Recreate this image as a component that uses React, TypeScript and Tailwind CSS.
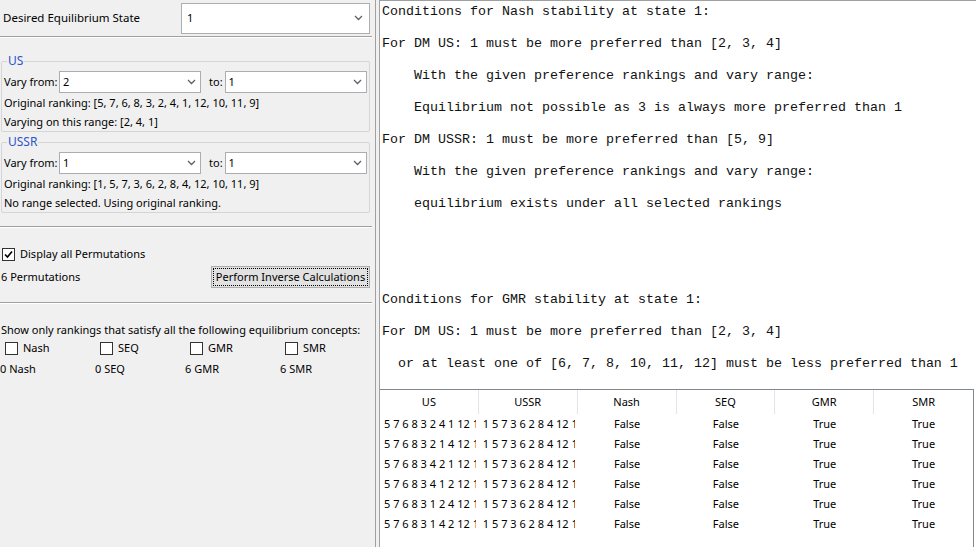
import React from "react";

const ui = { fontFamily: '"Noto Sans", "Open Sans", sans-serif' };
const mono = { fontFamily: '"Liberation Mono", "Courier New", monospace' };

function Chevron() {
  return (
    <svg width="9" height="6" viewBox="0 0 9 6" className="shrink-0">
      <polyline points="1,1 4.5,4.5 8,1" fill="none" stroke="#606060" strokeWidth="1.3" />
    </svg>
  );
}

function Combo({ value, className }: { value: string; className: string }) {
  return (
    <div className={`flex shrink-0 items-center justify-between bg-white border border-[#abadb3] pl-[3px] pr-[4px] ${className}`}>
      <span>{value}</span>
      <Chevron />
    </div>
  );
}

function Box({ checked }: { checked?: boolean }) {
  return (
    <div className="w-[13px] h-[13px] border border-[#333333] bg-white flex items-center justify-center shrink-0">
      {checked && (
        <svg width="9" height="9" viewBox="0 0 9 9">
          <polyline points="1,4.5 3.5,7 8,1.5" fill="none" stroke="#000" strokeWidth="1.6" />
        </svg>
      )}
    </div>
  );
}

function Separator() {
  return <div className="w-[372px] border-t border-[#a0a0a0] border-b border-b-white" />;
}

function Group({
  title,
  from,
  to,
  ranking,
  note,
}: {
  title: string;
  from: string;
  to: string;
  ranking: string;
  note: string;
}) {
  return (
    <fieldset className="ml-px w-[369px] border border-[#d5d5d5] rounded-[2px] px-[1px] pb-0">
      <legend className="ml-[4px] px-[1px] text-[#2b55c8] leading-[14px] text-[12px]">{title}</legend>
      <div className="flex items-center h-[22px] mt-[3px] whitespace-nowrap">
        <span className="ml-[1px] mr-[2px] w-[53px] shrink-0">Vary from:</span>
        <Combo value={from} className="w-[142px] h-[22px]" />
        <span className="ml-[8px] mr-[2px] shrink-0">to:</span>
        <Combo value={to} className="w-[142px] h-[22px]" />
      </div>
      <div className="h-[19px] leading-[19px] ml-[1px] whitespace-nowrap">{ranking}</div>
      <div className="h-[19px] leading-[19px] ml-[1px] whitespace-nowrap">{note}</div>
    </fieldset>
  );
}

const textLines = [
  "Conditions for Nash stability at state 1:",
  "",
  "For DM US: 1 must be more preferred than [2, 3, 4]",
  "",
  "    With the given preference rankings and vary range:",
  "",
  "    Equilibrium not possible as 3 is always more preferred than 1",
  "",
  "For DM USSR: 1 must be more preferred than [5, 9]",
  "",
  "    With the given preference rankings and vary range:",
  "",
  "    equilibrium exists under all selected rankings",
  "",
  "",
  "",
  "",
  "",
  "Conditions for GMR stability at state 1:",
  "",
  "For DM US: 1 must be more preferred than [2, 3, 4]",
  "",
  "  or at least one of [6, 7, 8, 10, 11, 12] must be less preferred than 1",
];

const usRows = [
  "5 7 6 8 3 2 4 1 12 10 11 9",
  "5 7 6 8 3 2 1 4 12 10 11 9",
  "5 7 6 8 3 4 2 1 12 10 11 9",
  "5 7 6 8 3 4 1 2 12 10 11 9",
  "5 7 6 8 3 1 2 4 12 10 11 9",
  "5 7 6 8 3 1 4 2 12 10 11 9",
];
const ussr = "1 5 7 3 6 2 8 4 12 10 11 9";
const heads = ["US", "USSR", "Nash", "SEQ", "GMR", "SMR"];

export default function App() {
  return (
    <div className="flex w-[976px] h-[547px] overflow-hidden bg-white text-[11px] text-black" style={ui}>
      {/* left pane */}
      <div className="w-[376px] shrink-0 h-full bg-[#f0f0f0] border-r border-[#a0a0a0] flex flex-col whitespace-nowrap">
        <div className="flex items-center h-[36px]">
          <span className="ml-[3px] w-[178px] text-[11.5px]">Desired Equilibrium State</span>
          <Combo value="1" className="w-[189px] h-[31px] pl-[5px] pr-[6px]" />
        </div>
        <Separator />
        <div className="mt-[16px]">
          <Group
            title="US"
            from="2"
            to="1"
            ranking="Original ranking: [5, 7, 6, 8, 3, 2, 4, 1, 12, 10, 11, 9]"
            note="Varying on this range: [2, 4, 1]"
          />
        </div>
        <div className="mt-[3px]">
          <Group
            title="USSR"
            from="1"
            to="1"
            ranking="Original ranking: [1, 5, 7, 3, 6, 2, 8, 4, 12, 10, 11, 9]"
            note="No range selected. Using original ranking."
          />
        </div>
        <div className="mt-[13px]">
          <Separator />
        </div>
        <div className="flex items-center gap-[5px] ml-[2px] mt-[18px] h-[16px]">
          <Box checked />
          <span>Display all Permutations</span>
        </div>
        <div className="flex items-center justify-between mt-[4px] h-[22px] w-[370px]">
          <span className="ml-px">6 Permutations</span>
          <div className="h-[22px] w-[159px] bg-[#e1e1e1] border border-[#adadad] p-[1px]">
            <div className="h-full w-full border border-dotted border-black flex items-center justify-center">
              Perform Inverse Calculations
            </div>
          </div>
        </div>
        <div className="mt-[14px]">
          <Separator />
        </div>
        <div className="mt-[18px] ml-px h-[16px] leading-[16px]">
          Show only rankings that satisfy all the following equilibrium concepts:
        </div>
        <div className="grid grid-cols-[95px_90px_95px_1fr] mt-[2px] h-[16px]">
          {["Nash", "SEQ", "GMR", "SMR"].map((n) => (
            <div key={n} className="flex items-center gap-[5px] pl-[5px]">
              <Box />
              <span>{n}</span>
            </div>
          ))}
        </div>
        <div className="grid grid-cols-[95px_90px_95px_1fr] mt-[5px] h-[16px] leading-[16px]">
          <span>0 Nash</span>
          <span>0 SEQ</span>
          <span>6 GMR</span>
          <span>6 SMR</span>
        </div>
      </div>
      <div className="w-[3px] shrink-0 bg-[#f0f0f0]" />
      {/* right pane */}
      <div className="flex-1 h-full border-l border-[#a0a0a0] flex flex-col">
        <div className="h-[387px] border-t border-[#a0a0a0] pt-[3px] pl-[2px] text-[13.33px] leading-[16px] text-[#111]" style={mono}>
          {textLines.map((l, i) => (
            <div key={i} className="h-[16px] whitespace-pre">
              {l}
            </div>
          ))}
        </div>
        <div className="mt-[2px] mr-[2px] flex-1 border-t border-r border-[#828790]">
          <div className="grid grid-cols-6 h-[24px] bg-white">
            {heads.map((h, i) => (
              <div
                key={h}
                className={`flex items-center justify-center ${i < 5 ? "border-r border-[#e5e5e5]" : ""}`}
              >
                {h}
              </div>
            ))}
          </div>
          {usRows.map((r, i) => (
            <div key={i} className="grid grid-cols-6 h-[20px] leading-[20px]">
              <div className="min-w-0">
                <div className="ml-[4px] mr-[3px] overflow-hidden whitespace-nowrap">{r}</div>
              </div>
              <div className="min-w-0">
                <div className="ml-[4px] mr-[3px] overflow-hidden whitespace-nowrap">{ussr}</div>
              </div>
              <div className="text-center">False</div>
              <div className="text-center">False</div>
              <div className="text-center">True</div>
              <div className="text-center">True</div>
            </div>
          ))}
        </div>
      </div>
    </div>
  );
}
